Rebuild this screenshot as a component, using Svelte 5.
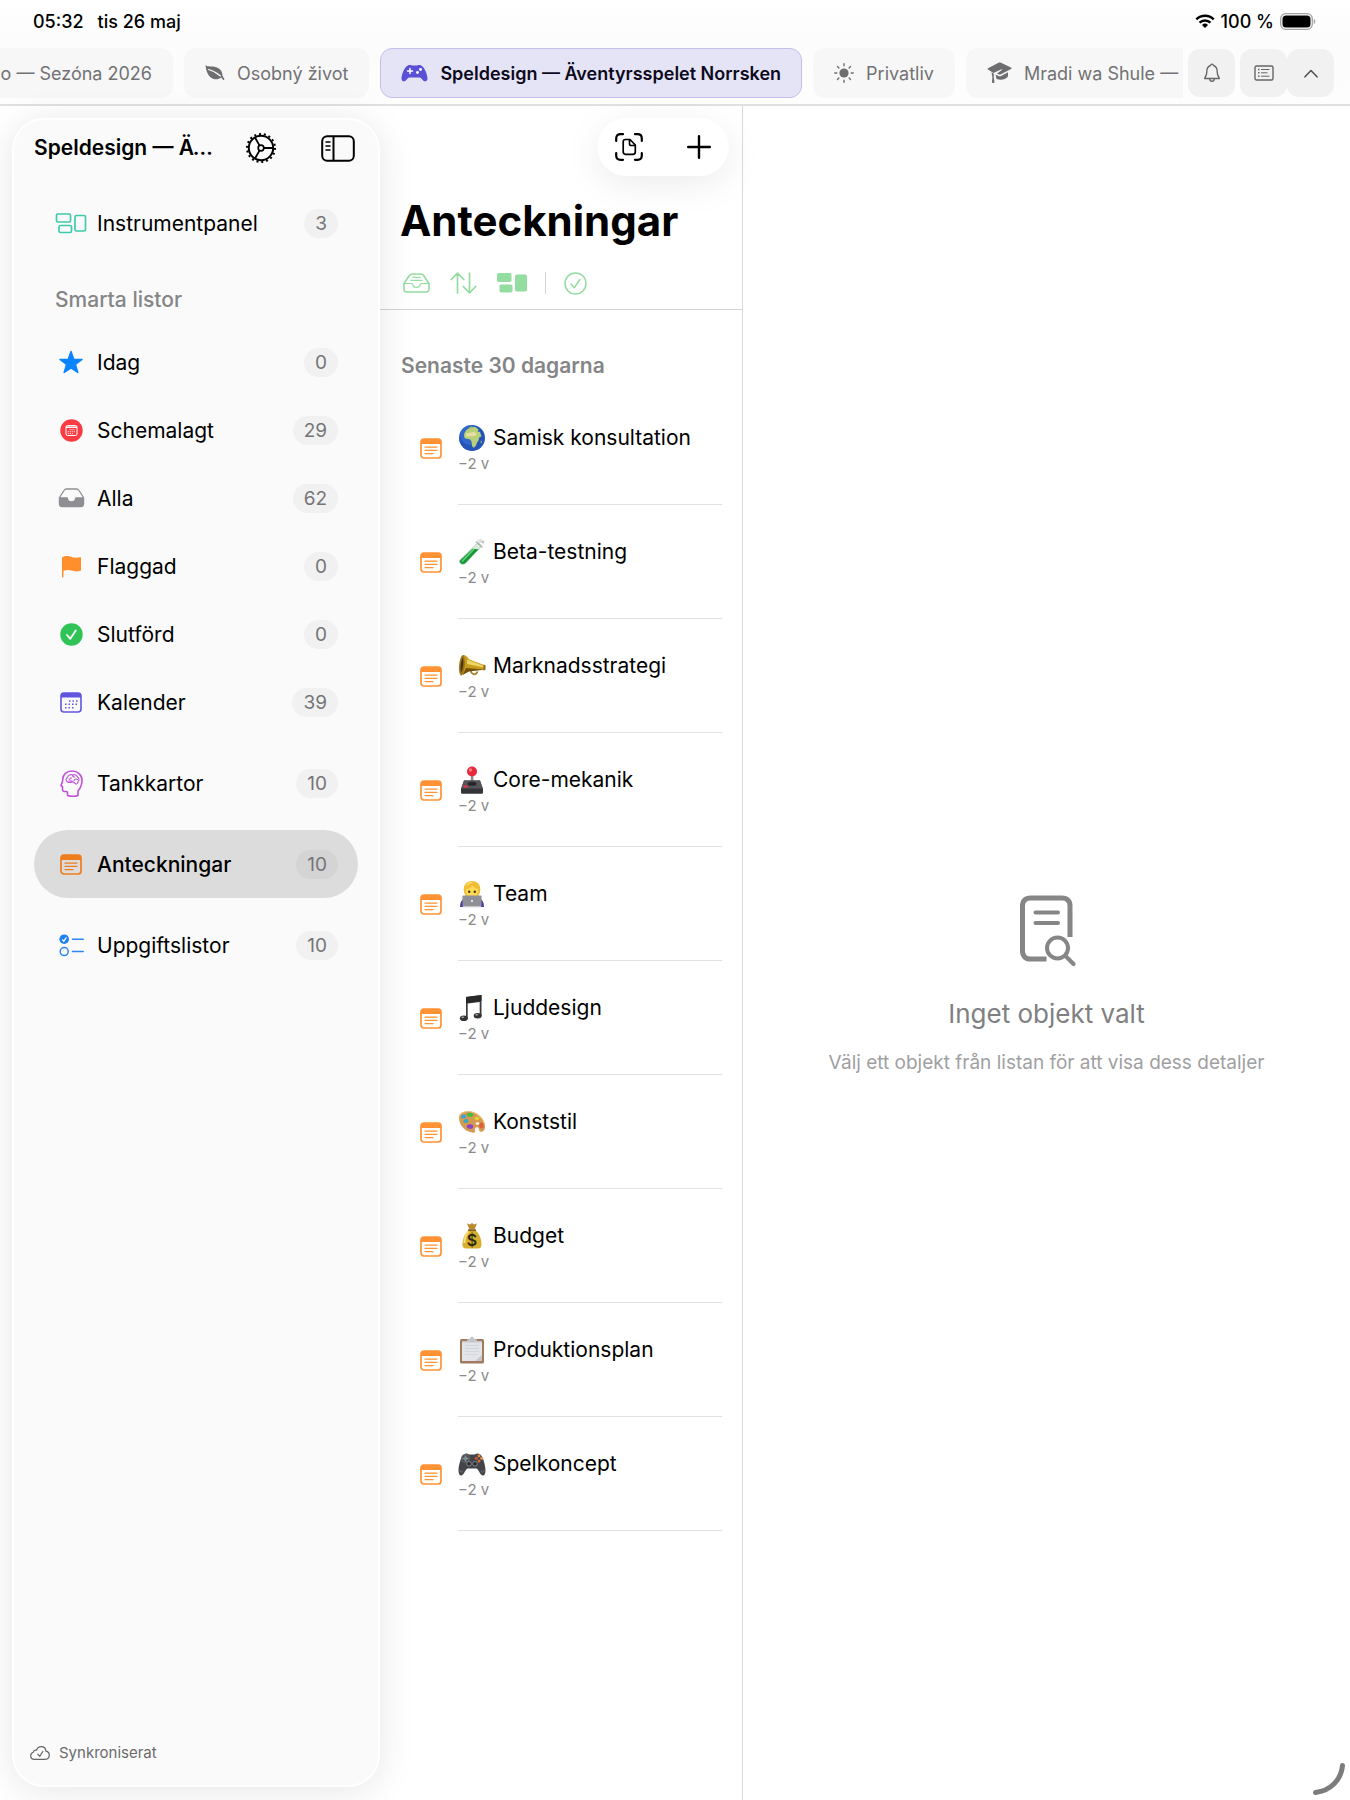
<script lang="ts">
	type NavItem = { icon: string; label: string; count: number };
	type Tab = { icon: string; label: string; clipped?: boolean };

	const tabs: Tab[] = [
		{ icon: '', label: 'vo — Sezóna 2026', clipped: true },
		{ icon: 'leaf', label: 'Osobný život' },
		{ icon: 'gamepad', label: 'Speldesign — Äventyrsspelet Norrsken' },
		{ icon: 'sun', label: 'Privatliv' },
		{ icon: 'cap', label: 'Mradi wa Shule — T' }
	];

	const sections: { title?: string; items: NavItem[] }[] = [
		{ items: [{ icon: 'panel', label: 'Instrumentpanel', count: 3 }] },
		{
			title: 'Smarta listor',
			items: [
				{ icon: 'star', label: 'Idag', count: 0 },
				{ icon: 'scheduled', label: 'Schemalagt', count: 29 },
				{ icon: 'tray', label: 'Alla', count: 62 },
				{ icon: 'flag', label: 'Flaggad', count: 0 },
				{ icon: 'done', label: 'Slutförd', count: 0 },
				{ icon: 'calendar', label: 'Kalender', count: 39 }
			]
		},
		{ items: [{ icon: 'head', label: 'Tankkartor', count: 10 }] },
		{ items: [{ icon: 'note', label: 'Anteckningar', count: 10 }] },
		{ items: [{ icon: 'tasks', label: 'Uppgiftslistor', count: 10 }] }
	];

	const notes = [
		{ icon: 'globe', title: 'Samisk konsultation', age: '−2 v' },
		{ icon: 'tube', title: 'Beta-testning', age: '−2 v' },
		{ icon: 'megaphone', title: 'Marknadsstrategi', age: '−2 v' },
		{ icon: 'joystick', title: 'Core-mekanik', age: '−2 v' },
		{ icon: 'coder', title: 'Team', age: '−2 v' },
		{ icon: 'music', title: 'Ljuddesign', age: '−2 v' },
		{ icon: 'palette', title: 'Konststil', age: '−2 v' },
		{ icon: 'money', title: 'Budget', age: '−2 v' },
		{ icon: 'clipboard', title: 'Produktionsplan', age: '−2 v' },
		{ icon: 'controller', title: 'Spelkoncept', age: '−2 v' }
	];

	let activeTab = $state('Speldesign — Äventyrsspelet Norrsken');
	let activeItem = $state('Anteckningar');
</script>

{#snippet tabIcon(name: string)}
	{#if name === 'leaf'}
		<svg width="20" height="18" viewBox="0 0 20 18" fill="#6e6e70">
			<path d="M.5 1C3 3.500 7 1.500 12 3.500c4 1.600 5.500 5 5.500 8.300l2 3.500-1.200 1-2-2.700C11 17.500 1.500 15.500.5 1z" />
			<path d="M3.500 5.500c4 1 8 3 12 6.500" fill="none" stroke="#f7f7f7" stroke-width="1.100" stroke-linecap="round" />
		</svg>
	{:else if name === 'gamepad'}
		<svg width="27" height="18" viewBox="0 0 27 18">
			<path d="M7 1.500C8 .8 9.500 1 11 1.500h5c1.500-.5 3-.7 4 0 3.500 1 6.500 9.500 6.500 13 0 2-1.200 2.800-2.600 2.800-2.200 0-3.200-3.800-5.400-3.800h-10c-2.200 0-3.200 3.800-5.400 3.800C1.700 17.300.5 16.500.5 14.500.5 11 3.500 2.500 7 1.500z" fill="#5a50d8" />
			<path d="M9 4.500v5M6.500 7h5" stroke="#fff" stroke-width="1.500" stroke-linecap="round" />
			<circle cx="19.500" cy="5.500" r="1.400" fill="#fff" />
			<circle cx="16.500" cy="8.500" r="1.400" fill="#fff" />
		</svg>
	{:else if name === 'sun'}
		<svg width="20" height="20" viewBox="0 0 20 20">
			<circle cx="10" cy="10" r="4.600" fill="#6e6e70" />
			<path d="M10 .8v2M10 17.200v2M.8 10h2M17.200 10h2M3.500 3.500l1.400 1.400M15.100 15.100l1.400 1.400M3.500 16.500l1.400-1.400M15.100 4.900l1.400-1.400" stroke="#6e6e70" stroke-width="1.400" stroke-linecap="round" />
		</svg>
	{:else if name === 'cap'}
		<svg width="25" height="22" viewBox="0 0 25 22" fill="#6e6e70">
			<path d="M1 6.200 11.500.8c1-.5 1.500-.5 2.500 0l10 4.700c.8.4.8 1 0 1.400L14 12.300c-1 .5-1.500.5-2.500 0L10 11.500l4.500-3.200c.6-.5.2-1.300-.6-.9L6.500 11 1 7.500c-.6-.4-.6-.9 0-1.300z" />
			<path d="m8.500 12.500 2.500 1.300c1.300.7 2.300.7 3.600 0l6.400-3.500v4c-1.500 3-7 4.500-11.500 2.700zM4.500 10.300l2.300 1.500v3.700l.7 4.500c0 1.400-2.600 1.400-2.600 0l.5-4.500z" />
		</svg>
	{/if}
{/snippet}

{#snippet noteIcon(color: string)}
	<svg width="22" height="21" viewBox="0 0 22 21">
		<rect x="1" y="1" width="20" height="19" rx="3" fill="none" stroke={color} stroke-width="1.700" />
		<path d="M1 6V4a3 3 0 0 1 3-3h14a3 3 0 0 1 3 3v2z" fill={color} />
		<path d="M5 9.200h12M5 12.400h12M5 15.600h8" stroke={color} stroke-width="1.200" stroke-linecap="round" />
	</svg>
{/snippet}

{#snippet navIcon(name: string)}
	{#if name === 'panel'}
		<svg width="32" height="21" viewBox="0 0 32 21" fill="none" stroke="#3fcbab" stroke-width="1.700">
			<rect x="1.500" y="1" width="14" height="8" rx="1.500" />
			<rect x="4" y="12.500" width="12.500" height="7" rx="1.500" />
			<rect x="20" y="2.500" width="10.500" height="15.500" rx="1.500" />
		</svg>
	{:else if name === 'star'}
		<svg width="26" height="25" viewBox="0 0 26 25" fill="#0a84ff">
			<path d="M13 1.500 15.700 9.300 24 9.400 17.400 14.500 19.800 22.500 13 17.800 6.200 22.500 8.600 14.500 2 9.400 10.300 9.300z" stroke="#0a84ff" stroke-width="1.500" stroke-linejoin="round" />
		</svg>
	{:else if name === 'scheduled'}
		<svg width="23" height="23" viewBox="0 0 23 23">
			<circle cx="11.500" cy="11.500" r="11.200" fill="#fb3b42" />
			<rect x="6" y="6.500" width="11" height="10" rx="1.500" fill="none" stroke="#fff" stroke-width="1" />
			<path d="M6 8.200h11" stroke="#fff" stroke-width="1.500" />
			<path d="M9.500 10.700h6M7.800 12.700h7.500M7.800 14.600h5" stroke="#fff" stroke-dasharray="1 1" />
		</svg>
	{:else if name === 'tray'}
		<svg width="27" height="20" viewBox="0 0 27 20">
			<path d="M1.500 9.500 6 2.500C6.600 1.500 7.300 1 8.500 1h10c1.200 0 1.900.5 2.500 1.500l4.500 7" fill="none" stroke="#8e8e93" stroke-width="1.300" />
			<path d="M.8 9.200H9c.7 0 1 .5 1 1 0 1.700 1.500 3 3.500 3s3.500-1.300 3.500-3c0-.5.300-1 1-1h8.200V16c0 2-1.200 3.200-3.200 3.200H4C2 19.200.8 18 .8 16z" fill="#8e8e93" />
		</svg>
	{:else if name === 'flag'}
		<svg width="21" height="23" viewBox="0 0 21 23">
			<path d="M1 2.500C4 .3 8 1 10.500 2c3 1.200 6 .8 8.500.3.800-.2 1 .2 1 .9v12.300c-3.500 1.400-6.500 1.100-9.500.1-2.500-.8-5-.9-8 .2V22c0 .5-1.500.5-1.500 0z" fill="#ff8f2c" />
		</svg>
	{:else if name === 'done'}
		<svg width="23" height="23" viewBox="0 0 23 23">
			<circle cx="11.500" cy="11.500" r="11.200" fill="#2fc455" />
			<path d="m7 12 3.300 3.800 5.500-8.300" fill="none" stroke="#fff" stroke-width="1.800" stroke-linecap="round" stroke-linejoin="round" />
		</svg>
	{:else if name === 'calendar'}
		<svg width="22" height="21" viewBox="0 0 22 21">
			<rect x="1" y="1" width="20" height="19" rx="3" fill="none" stroke="#6155e0" stroke-width="1.600" />
			<path d="M1 5.500V4a3 3 0 0 1 3-3h14a3 3 0 0 1 3 3v1.500z" fill="#6155e0" />
			<path d="M9 9h8.500M5 12.300h12.500M5 15.800h9" stroke="#6155e0" stroke-width="1.500" stroke-dasharray="1.500 2" />
		</svg>
	{:else if name === 'head'}
		<svg width="23" height="27" viewBox="0 0 23 27" fill="none" stroke="#c052d8" stroke-width="1.600" stroke-linejoin="round" stroke-linecap="round">
			<path d="M7.500 25.500c3 .9 8 .9 10.500 0v-4.500c2.500-3 4-6.500 4-10.500C22 5 17.500 1 12 1S3 4.500 2.800 9c0 1.500-.2 2.500-.8 3.700L1 15.200c-.2.600.3.900 1.500 1.200v2.800c0 1.800 1.200 2.500 2.800 2.300 1.500-.2 2.200.3 2.200 1.500z" />
			<path d="M7 11.500c-1.500-1-1.200-3.500.5-4C8 5 11 4 12.500 5c2-1 4.500.2 5 2 1.800 1 2 3.500.5 4.500 0 2-1.500 2.800-2.500 2.300-1.500-2-2-2.300-3.500-1.800-1.500.6-3.800.7-5-.5zM9 9c1.500.5 2.500-.5 2-1.500M12.500 5c0 1.500.5 2 2 2M17.500 9.500c-1.500-.8-3-.3-3.500 1M9 11h3" stroke-width="1.100" />
		</svg>
	{:else if name === 'note'}
		{@render noteIcon('#ee7d1e')}
	{:else}
		<svg width="25" height="23" viewBox="0 0 25 23" fill="none" stroke="#2d85f7">
			<circle cx="5.200" cy="5.200" r="4.800" fill="#1d80f3" stroke="none" />
			<path d="m3.200 5.500 1.600 1.800 2.600-4" stroke="#fff" stroke-width="1.200" />
			<circle cx="5.200" cy="17.600" r="4" stroke-width="1.500" />
			<path d="M13.500 5.200h10.700M13.500 17.600h10.700" stroke-width="1.500" stroke-linecap="round" />
		</svg>
	{/if}
{/snippet}

{#snippet emoji(name: string)}
	<svg class="emoji" width="28" height="28" viewBox="0 0 28 28" aria-hidden="true">
		{#if name === 'globe'}
			<circle cx="14" cy="14" r="13" fill="#2454b8" />
			<circle cx="12" cy="11" r="10" fill="#3b74d6" opacity=".6" />
			<path d="M8 6.500C10 4 15 2.500 17.500 3l3 2.500-1 2 2.500.5 1.500 4.500-2.500 1c0 2.500-1 4-2.200 5.500-.6 3-2.300 5-3.800 4.500-1.500-1.500-1-4-1.500-6-.6-1.500-1.500-2.500-3-2.500-3 .2-4.500-1-4.500-3.500C6 9.500 7 8 8 6.500z" fill="#b9cf78" />
			<path d="m8 9.500 8-1.500 3 1.500-2 2.500-9 .5z" fill="#e9dfa0" />
			<path d="M11 3.500 13.500 2l1 1.200-3 1.500zM22.500 18l1-2 .5 2-1.200 1.800z" fill="#8fb45a" />
		{:else if name === 'tube'}
			<path d="M20 4.500 23.700 8 7.500 25.300C5.500 27.300 1 26.500 1.500 22.500z" fill="#dcebe0" stroke="#93b59c" stroke-width=".6" />
			<path d="m14.500 10.700 6 .6L7.500 25C5 27 2 26 1.800 22.800z" fill="#17963a" />
			<path d="m16 11-12 12.500" stroke="#5fdd7b" stroke-width="1.300" />
			<path d="m18.500 4 5.500 5" stroke="#a4b5a8" stroke-width="1.500" stroke-linecap="round" />
			<circle cx="22.500" cy="3" r="2" fill="#dedede" />
			<circle cx="25" cy="4" r="1.500" fill="#c8c8c8" />
			<circle cx="20.500" cy="2.500" r="1.200" fill="#e5e5e5" />
		{:else if name === 'megaphone'}
			<path d="M13 17c-1 5 5 7.500 6.500 2.500" fill="none" stroke="#a47d24" stroke-width="1.800" />
			<path d="M5 3c3-.5 5 3 6.500 4.500L26 13v5l-15 1-8 4.500c-2-1 .5-5.500 1-10z" fill="#c79d20" />
			<path d="m9 7.500 17 6.500v1.500L9 12z" fill="#efd565" />
			<path d="m8 16 18 1.500-15 2L4.500 23z" fill="#75510b" />
			<path d="M5.500 3C3 2.500 1 10 1 16c0 4.500 1 7.500 2.500 7.500C7 20 8 8 5.500 3z" fill="#9a7418" />
			<path d="M4.800 5.500C3 9 2 16 3 20.500 5 17 6 10 4.800 5.500z" fill="#493409" />
			<path d="m25.500 12.500 2 .7v4.500l-2 .7z" fill="#8a6518" />
		{:else if name === 'joystick'}
			<path d="M12.800 9h2.600v9h-2.600z" fill="#8d8d91" />
			<circle cx="14" cy="5.500" r="5" fill="#e9283e" />
			<circle cx="12.500" cy="4" r="1.700" fill="#ff7d83" />
			<path d="M6 14.500h16l3 8.500v3.500c0 .9-.7 1.300-1.500 1.300h-19c-.8 0-1.500-.4-1.500-1.300V23z" fill="#343439" />
			<path d="M6 14.500h16l2.800 8H3.200z" fill="#54545a" />
			<ellipse cx="14" cy="17.800" rx="4.500" ry="2" fill="#27272b" />
			<ellipse cx="7.500" cy="20.500" rx="2.500" ry="1.200" fill="#e03246" />
		{:else if name === 'coder'}
			<path d="M2 27c0-6 3-9 7-9h10c4 0 7 3 7 9z" fill="#4a3da6" />
			<path d="M6 12C4.500 5 8.500 1 14 1s9.500 4 8 11l-1.500 4h-13z" fill="#f0bd35" />
			<path d="M8 9c0 6 2 9.500 6 9.500S20 15 20 9c-2-.5-4-1.500-5.500-3.500C13 7.500 11 9 8 9z" fill="#ffdb55" />
			<path d="M9 5c1-1.500 3-2.500 5-2.500" fill="none" stroke="#ffe07a" stroke-width="1.300" stroke-linecap="round" />
			<circle cx="11.200" cy="11.800" r="1.200" fill="#453218" />
			<circle cx="16.800" cy="11.800" r="1.200" fill="#453218" />
			<rect x="4.500" y="15.500" width="19" height="11" rx="1" fill="#8f9096" />
			<circle cx="14" cy="21" r="1" fill="#fff" />
			<path d="M5 26h18v1.300H5z" fill="#c6c6cb" />
		{:else if name === 'music'}
			<path d="M8 3 23.500 1v21h-1.800V8L9.700 9.500V25H8z" fill="#3b3b3d" />
			<path d="M8 3 23.500 1v6L8 9.200z" fill="#29292b" />
			<ellipse cx="5.800" cy="24.200" rx="4" ry="2.800" fill="#333335" />
			<ellipse cx="19.700" cy="21.700" rx="4" ry="2.800" fill="#333335" />
			<ellipse cx="4.800" cy="23.300" rx="1.500" ry=".7" fill="#a9a9ad" />
			<ellipse cx="18.700" cy="20.800" rx="1.500" ry=".7" fill="#a9a9ad" />
		{:else if name === 'palette'}
			<path d="M1 10C1 6 5 3.500 10 3.500 19 3.500 27 11 27 19c0 4-3 5.500-5 4.500-1.500-.8-.5-3-2-4-2-1-4 1-3 3 .7 2-1 2.500-3 2C6.500 23.500 1 16.500 1 10z" fill="#d39a50" />
			<path d="M1 10C1 6 5 3.500 10 3.500c8 0 15 6 16.500 13" fill="none" stroke="#eabf79" stroke-width="1.200" />
			<ellipse cx="12" cy="6.800" rx="3.200" ry="2" fill="#42bd43" />
			<ellipse cx="5.500" cy="8.500" rx="2.500" ry="1.900" fill="#37a2dc" />
			<ellipse cx="8" cy="13" rx="2.600" ry="2" fill="#39aabd" />
			<ellipse cx="12" cy="18.500" rx="3.200" ry="2.300" fill="#8d44c5" />
			<ellipse cx="19" cy="10.500" rx="2.400" ry="1.800" fill="#efcf30" />
			<ellipse cx="23.500" cy="17.500" rx="2.400" ry="3" fill="#e2613d" />
			<ellipse cx="19.500" cy="15.500" rx="1.800" ry="1.300" fill="#fff" />
		{:else if name === 'money'}
			<path d="m9 1.500 3 1 2-1.500 2 1.500 3-1-2.500 6h-5z" fill="#b98b2d" />
			<path d="M11 8h6c4 3 6.500 8.500 6.500 14.500 0 3-1.500 4-4 4h-11c-2.500 0-4-1-4-4C4.500 16.500 7 11 11 8z" fill="#d8ae30" />
			<path d="M11 9c-3 3-4.500 8-4.500 12" fill="none" stroke="#f4de77" stroke-width="2" />
			<path d="M10 7.300h8v1.800h-8z" fill="#816020" />
			<text x="14" y="24" text-anchor="middle" class="dollar">$</text>
		{:else if name === 'clipboard'}
			<rect x="2" y="3" width="24" height="24.500" rx="1.500" fill="#a27b5c" />
			<path d="M4 5h20v20H4z" fill="#e2e4e8" />
			<path d="M4 5h20v1.500H4zM17 25l7-6v6z" fill="#c5c8ce" />
			<path d="M7 9.500h14M7 12.500h14M7 15.500h14M7 18.500h12" stroke="#cfd2d8" stroke-width=".8" />
			<path d="M9 3.500c2 0 3-.5 3.500-2C13 0 15 0 15.500 1.500c.5 1.500 1.500 2 3.500 2v2.300H9z" fill="#c3c5ca" />
		{:else}
			<path d="M6 4.500C8 2.500 10 4 11.500 4.500h5C18 4 20 2.500 22 4.500c2.500.5 5.500 10.500 5.500 16 0 4-1.500 5.500-3 5-2.500-.5-4-6.500-6-7h-9c-2 .5-3.500 6.500-6 7-1.500.5-3-1-3-5C.500 15 3.500 5 6 4.500z" fill="#434448" />
			<path d="M2 20c.5 3 1.500 3 3 .5M26 20c-.5 3-1.500 3-3 .5" fill="none" stroke="#737479" />
			<path d="M7.500 5.500v6M4.500 8.500h6" stroke="#7e8e93" stroke-width="2" />
			<circle cx="7.500" cy="8.500" r="4" fill="none" stroke="#68696f" />
			<circle cx="21" cy="5.700" r="1.500" fill="#e88a45" />
			<circle cx="21" cy="11" r="1.500" fill="#d66e3e" />
			<circle cx="18.300" cy="8.300" r="1.500" fill="#d2553e" />
			<circle cx="23.700" cy="8.300" r="1.500" fill="#e59a54" />
			<circle cx="11" cy="13.800" r="2.300" fill="#27282b" stroke="#85868a" />
			<circle cx="17" cy="13.800" r="2.300" fill="#27282b" stroke="#85868a" />
		{/if}
	</svg>
{/snippet}

<div class="app">
	<header class="top">
		<div class="status">
			<span>05:32</span>
			<span>tis 26 maj</span>
			<div class="system">
				<svg width="20" height="15" viewBox="0 0 20 15" fill="none" stroke="#000" stroke-width="2.400">
					<path d="M1.300 5.300a12.600 12.600 0 0 1 17.400 0M4.500 8.700a8 8 0 0 1 11 0" />
					<path d="m10 14 3-3.100a4.300 4.300 0 0 0-6 0z" fill="#000" stroke="none" />
				</svg>
				<span>100 %</span>
				<svg class="battery" width="36" height="17" viewBox="0 0 36 17">
					<rect x=".7" y=".7" width="31.600" height="15.600" rx="5" fill="none" stroke="#a2a2a4" stroke-width="1.300" />
					<rect x="2.500" y="2.500" width="28" height="12" rx="3.500" />
					<path d="M33.800 6c2 .6 2 4.400 0 5z" fill="#a2a2a4" />
				</svg>
			</div>
		</div>
		<div class="tab-bar">
			<nav class="tabs">
				{#each tabs as tab}
					<button
						type="button"
						class="tab"
						class:clipped={tab.clipped}
						class:active={tab.label === activeTab}
						onclick={() => (activeTab = tab.label)}
					>
						{@render tabIcon(tab.icon)}
						<span>{tab.label}</span>
					</button>
				{/each}
			</nav>
			<div class="tab-actions">
				<button type="button" class="square" aria-label="Aviseringar">
					<svg width="18" height="20" viewBox="0 0 18 20" fill="none" stroke="#666" stroke-width="1.400" stroke-linejoin="round">
						<path d="M1.700 15.500c0-1.700 2-2.200 2-6C3.700 5.500 5.500 3 7.500 2.500c.3-1.800 2.700-1.800 3 0 2 .5 3.800 3 3.800 7 0 3.800 2 4.300 2 6z" />
						<path d="M6.700 16c.2 3 4.400 3 4.600 0" />
					</svg>
				</button>
				<div class="pair">
					<button type="button" class="square" aria-label="Översikt">
						<svg width="20" height="16" viewBox="0 0 20 16" fill="none" stroke="#666" stroke-width="1.400">
							<rect x="1" y="1" width="18" height="14" rx="1.500" />
							<path d="M7 4.500h8.500M7 7.800h6.500M7 11.200h8.500" stroke-width="1" />
							<path d="M4 4.500h1.500M4 7.800h1.500M4 11.200h1.500" />
						</svg>
					</button>
					<button type="button" class="square" aria-label="Dölj flikar">
						<svg width="14" height="9" viewBox="0 0 14 9" fill="none" stroke="#555" stroke-width="1.600" stroke-linecap="round" stroke-linejoin="round">
							<path d="m1 7.800 6-6.300 6 6.300" />
						</svg>
					</button>
				</div>
			</div>
		</div>
	</header>

	<div class="columns">
		<aside class="sidebar">
			<div class="sidebar-head">
				<h2>Speldesign — Äventyrsspelet Norrsken</h2>
				<button type="button" aria-label="Inställningar">
					<svg width="32" height="32" viewBox="0 0 32 32" fill="none" stroke="#000">
						<circle cx="16" cy="16" r="12.200" stroke-width="2" />
						<circle cx="16" cy="16" r="14" stroke-width="2" stroke-dasharray="2 2.887" />
						<circle cx="16" cy="16" r="2.800" stroke-width="1.700" />
						<path d="M18.800 16H28M14.600 13.600 10 5.500M14.600 18.400 10 26.500" stroke-width="1.800" />
					</svg>
				</button>
				<button type="button" aria-label="Visa eller dölj sidofältet">
					<svg width="34" height="27" viewBox="0 0 34 27" fill="none" stroke="#000" stroke-width="2">
						<rect x="1.200" y="1.200" width="31.600" height="24.600" rx="5" />
						<path d="M12.500 1v25" />
						<path d="M5 7h4M5 11h4M5 15h4" stroke-width="1.500" stroke-linecap="round" />
					</svg>
				</button>
			</div>
			<nav class="sections">
				{#each sections as section}
					<div class="section">
						{#if section.title}
							<h3>{section.title}</h3>
						{/if}
						{#each section.items as item}
							<button
								type="button"
								class="nav-item"
								class:selected={item.label === activeItem}
								onclick={() => (activeItem = item.label)}
							>
								<span class="nav-icon">{@render navIcon(item.icon)}</span>
								<span class="nav-label">{item.label}</span>
								<span class="count">{item.count}</span>
							</button>
						{/each}
					</div>
				{/each}
			</nav>
			<footer class="sync">
				<svg width="20" height="14" viewBox="0 0 20 14" fill="none" stroke="#666" stroke-width="1.200" stroke-linecap="round" stroke-linejoin="round">
					<path d="M4.500 13.300C2.300 13.300.7 11.800.7 9.700c0-1.700 1-2.900 2.600-3.400C3.500 4.500 5 3.700 6.500 4.200 7.300 1.900 9 .7 11.200.7c2.700 0 4.500 1.800 4.700 4.400 2 .4 3.400 1.900 3.400 4 0 2.500-1.700 4.200-4 4.200z" />
					<path d="m7.800 8.200 2 2.100 3-4.800" />
				</svg>
				<span>Synkroniserat</span>
			</footer>
		</aside>

		<main class="list">
			<div class="list-head">
				<div class="pill">
					<button type="button" aria-label="Skanna dokument">
						<svg width="28" height="28" viewBox="0 0 28 28" fill="none" stroke="#000" stroke-width="2.200" stroke-linecap="round" stroke-linejoin="round">
							<path d="M1.200 8V5.500c0-2.800 1.500-4.300 4.300-4.300H8M20 1.200h2.500c2.800 0 4.300 1.500 4.300 4.300V8M26.800 20v2.500c0 2.800-1.500 4.300-4.300 4.300H20M8 26.800H5.500c-2.800 0-4.300-1.500-4.300-4.300V20" />
							<path d="M10.500 6.500h4.500l5.300 5.500v7c0 1.600-.8 2.300-2.300 2.300h-7.500c-1.500 0-2.300-.7-2.300-2.300V8.800c0-1.600.8-2.300 2.300-2.300zM14.500 6.800v4c0 1.200.5 1.700 1.700 1.700h3.800" stroke-width="1.700" />
						</svg>
					</button>
					<button type="button" aria-label="Ny anteckning">
						<svg width="24" height="24" viewBox="0 0 24 24" stroke="#000" stroke-width="2.400" stroke-linecap="round">
							<path d="M12 1.200v21.600M1.200 12h21.600" />
						</svg>
					</button>
				</div>
				<h1>Anteckningar</h1>
				<div class="tools">
					<button type="button" aria-label="Arkiv">
						<svg width="27" height="20" viewBox="0 0 27 20" fill="none" stroke="#93dda0" stroke-width="1.600" stroke-linejoin="round">
							<path d="M1 10.500 6 3C7 1.500 7.700 1 9.500 1h8c1.800 0 2.500.5 3.500 2l5 7.500V16c0 2-1 3-3 3H4c-2 0-3-1-3-3z" />
							<path d="M1 10.500h7.500c1 0 1.200.5 1.300 1.200.3 1.700 1.700 2.700 3.700 2.700s3.400-1 3.700-2.700c.1-.7.3-1.200 1.300-1.200H26M9.500 4.300h8M7.500 7.300h12" stroke-width="1.200" />
						</svg>
					</button>
					<button type="button" aria-label="Sortera">
						<svg width="27" height="22" viewBox="0 0 27 22" fill="none" stroke="#93dda0" stroke-width="1.700" stroke-linecap="round" stroke-linejoin="round">
							<path d="M7.500 21V1.200M1.200 7.500l6.300-6.300 6.300 6.300M19.500 1v19.800M13.200 14.500l6.300 6.300 6.300-6.300" />
						</svg>
					</button>
					<button type="button" aria-label="Gruppera">
						<svg width="30" height="20" viewBox="0 0 30 20" fill="#93dda0">
							<rect width="14.500" height="9" rx="1.700" />
							<rect x="2.500" y="11.500" width="13" height="8" rx="1.700" />
							<rect x="18" y="1.500" width="12" height="17" rx="1.700" />
						</svg>
					</button>
					<span class="divider"></span>
					<button type="button" aria-label="Markera">
						<svg width="23" height="23" viewBox="0 0 23 23" fill="none" stroke="#93dda0" stroke-width="1.500" stroke-linecap="round" stroke-linejoin="round">
							<circle cx="11.500" cy="11.500" r="10.500" />
							<path d="m7 12 3.300 3.800 5.500-8.300" />
						</svg>
					</button>
				</div>
			</div>
			<h2 class="group-title">Senaste 30 dagarna</h2>
			<ul class="notes">
				{#each notes as note}
					<li>
						<button type="button" class="note">
							{@render noteIcon('#ff9233')}
							<span class="note-body">
								<span class="note-title">{@render emoji(note.icon)}{note.title}</span>
								<span class="note-age">{note.age}</span>
							</span>
						</button>
					</li>
				{/each}
			</ul>
		</main>

		<section class="detail">
			<svg width="58" height="74" viewBox="0 0 58 74" fill="none" stroke="#868686" stroke-width="5">
				<path d="M28.500 64H12.500c-5 0-8-3-8-8V11c0-5 3-8 8-8h31.500c5 0 8 3 8 8v31" />
				<path d="M17.500 17.500h22.500M17.500 28h22.500" stroke-width="4" stroke-linecap="round" />
				<circle cx="39.500" cy="53" r="10.500" stroke-width="4" />
				<path d="m47.500 61 8 8" stroke-width="4" stroke-linecap="round" />
			</svg>
			<h2>Inget objekt valt</h2>
			<p>Välj ett objekt från listan för att visa dess detaljer</p>
		</section>
	</div>

	<svg class="corner" width="34" height="34" viewBox="0 0 34 34" fill="none" stroke="#7c7c7c" stroke-width="5" stroke-linecap="round">
		<path d="M3.500 30.500C18 29 29 18.500 30.500 3.500" />
	</svg>
</div>

<style>
	:global(body) {
		margin: 0;
		background: #fff;
	}

	.app {
		position: relative;
		display: flex;
		flex-direction: column;
		min-height: 100vh;
		font-family: Inter, 'Liberation Sans', sans-serif;
		color: #000;
	}

	button {
		display: flex;
		align-items: center;
		padding: 0;
		border: 0;
		background: none;
		font: inherit;
		color: inherit;
		text-align: left;
		cursor: pointer;
	}

	h1,
	h2,
	h3,
	p,
	ul {
		margin: 0;
		padding: 0;
	}

	svg {
		flex: none;
	}

	.top {
		border-bottom: 2px solid #e0e0e0;
		background: linear-gradient(#fff, #fcfcfc 40px, #fdfdfd);
	}

	.status {
		display: flex;
		align-items: center;
		gap: 14px;
		height: 40px;
		padding: 2px 34px 0 33px;
		box-sizing: border-box;
		font-size: 18px;
		font-weight: 500;
	}

	.system {
		display: flex;
		align-items: center;
		gap: 6px;
		margin-left: auto;
	}

	.tab-bar {
		display: flex;
		gap: 5px;
		padding: 8px 16px 6px 0;
	}

	.tabs {
		display: flex;
		flex: 1;
		gap: 11px;
		min-width: 0;
		overflow: hidden;
	}

	.tab {
		flex: none;
		gap: 12px;
		height: 50px;
		padding: 0 20px;
		border: 1px solid transparent;
		border-radius: 12px;
		box-sizing: border-box;
		background: #f7f7f7;
		font-size: 18px;
		color: #727274;
		white-space: nowrap;
	}

	.tab.clipped {
		width: 173px;
		justify-content: flex-end;
		padding-left: 0;
		border-radius: 0 12px 12px 0;
		overflow: hidden;
	}

	.tab.active {
		border-color: #c6bfec;
		background: #e5e3f6;
		font-weight: 600;
		color: #0c0a1c;
	}

	.tab-actions {
		display: flex;
		align-items: center;
		gap: 5px;
	}

	.pair {
		display: flex;
	}

	.square {
		justify-content: center;
		width: 47px;
		height: 48px;
		border-radius: 12px;
		background: #f1f1f1;
	}

	.columns {
		display: grid;
		flex: 1;
		grid-template-columns: 380px 363px 1fr;
	}

	.sidebar {
		position: relative;
		display: flex;
		flex-direction: column;
		margin: 12px 0 13px 12px;
		border: 2px solid #fff;
		border-radius: 32px;
		box-sizing: border-box;
		background: #fafafa;
		box-shadow: 0 4px 36px rgba(0, 0, 0, 0.1);
	}

	.sidebar-head {
		display: flex;
		align-items: center;
		height: 56px;
		padding: 0 23px 0 20px;
	}

	.sidebar-head h2 {
		flex: 1;
		margin-right: 28px;
		overflow: hidden;
		font-size: 21px;
		font-weight: 600;
		line-height: 28px;
		text-overflow: ellipsis;
		white-space: nowrap;
	}

	.sidebar-head button + button {
		margin-left: 44px;
	}

	.sections {
		display: flex;
		flex: 1;
		flex-direction: column;
		gap: 13px;
		padding: 13px 20px;
	}

	.section h3 {
		padding: 16px 21px 14px;
		font-size: 21px;
		font-weight: 500;
		line-height: 28px;
		color: #858587;
	}

	.nav-item {
		width: 100%;
		height: 68px;
		padding: 0 20px;
		border-radius: 34px;
		font-size: 21px;
	}

	.nav-item.selected {
		background: #dcdcdc;
		font-weight: 500;
	}

	.nav-icon {
		display: flex;
		justify-content: center;
		width: 34px;
	}

	.nav-label {
		flex: 1;
		padding-left: 9px;
	}

	.count {
		padding: 0 11px;
		border-radius: 15px;
		background: #f1f1f1;
		font-size: 19px;
		font-weight: 400;
		line-height: 29px;
		color: #757577;
	}

	.selected .count {
		background: #d4d4d4;
	}

	.sync {
		display: flex;
		align-items: center;
		gap: 9px;
		padding: 0 16px 22px;
		font-size: 15px;
		line-height: 20px;
		color: #6b6b6d;
	}

	.list {
		border-right: 1px solid #d9d9d9;
	}

	.list-head {
		display: flex;
		flex-direction: column;
		padding: 12px 13px 14px 20px;
		border-bottom: 1px solid #d4d4d4;
	}

	.pill {
		display: flex;
		align-self: flex-end;
		align-items: center;
		justify-content: space-between;
		width: 132px;
		height: 58px;
		padding: 0 18px;
		border-radius: 29px;
		box-sizing: border-box;
		background: #fff;
		box-shadow: 0 8px 36px rgba(0, 0, 0, 0.08);
	}

	h1 {
		margin-top: 19px;
		font-size: 42px;
		font-weight: 700;
		line-height: 52px;
	}

	.tools {
		display: flex;
		align-items: center;
		gap: 20px;
		height: 24px;
		margin-top: 24px;
		padding-left: 3px;
	}

	.divider {
		width: 1px;
		height: 22px;
		margin: 0 -2px;
		background: #d4d4d4;
	}

	.group-title {
		padding: 42px 21px 11px;
		font-size: 21px;
		font-weight: 600;
		line-height: 28px;
		color: #858587;
	}

	.notes {
		padding: 0 20px 0 40px;
		list-style: none;
	}

	.note {
		gap: 16px;
		width: 100%;
		height: 114px;
	}

	.note-body {
		display: flex;
		flex: 1;
		flex-direction: column;
		gap: 2px;
		height: 114px;
		padding-top: 33px;
		border-bottom: 1px solid #e2e2e2;
		box-sizing: border-box;
	}

	.note-title {
		display: flex;
		align-items: center;
		gap: 7px;
		font-size: 21px;
		line-height: 28px;
	}

	.note-age {
		font-size: 15px;
		line-height: 20px;
		color: #8a8a8c;
	}

	.dollar {
		font-size: 16px;
		font-weight: 600;
		fill: #2d2a12;
	}

	.detail {
		display: flex;
		flex-direction: column;
		align-items: center;
		justify-content: center;
		padding: 64px 20px 0;
		text-align: center;
	}

	.detail h2 {
		margin-top: 27px;
		font-size: 26px;
		font-weight: 400;
		line-height: 36px;
		color: #808082;
	}

	.detail p {
		margin-top: 18px;
		font-size: 19px;
		line-height: 26px;
		color: #a0a0a2;
	}

	.corner {
		position: absolute;
		right: 4px;
		bottom: 4px;
	}
</style>
